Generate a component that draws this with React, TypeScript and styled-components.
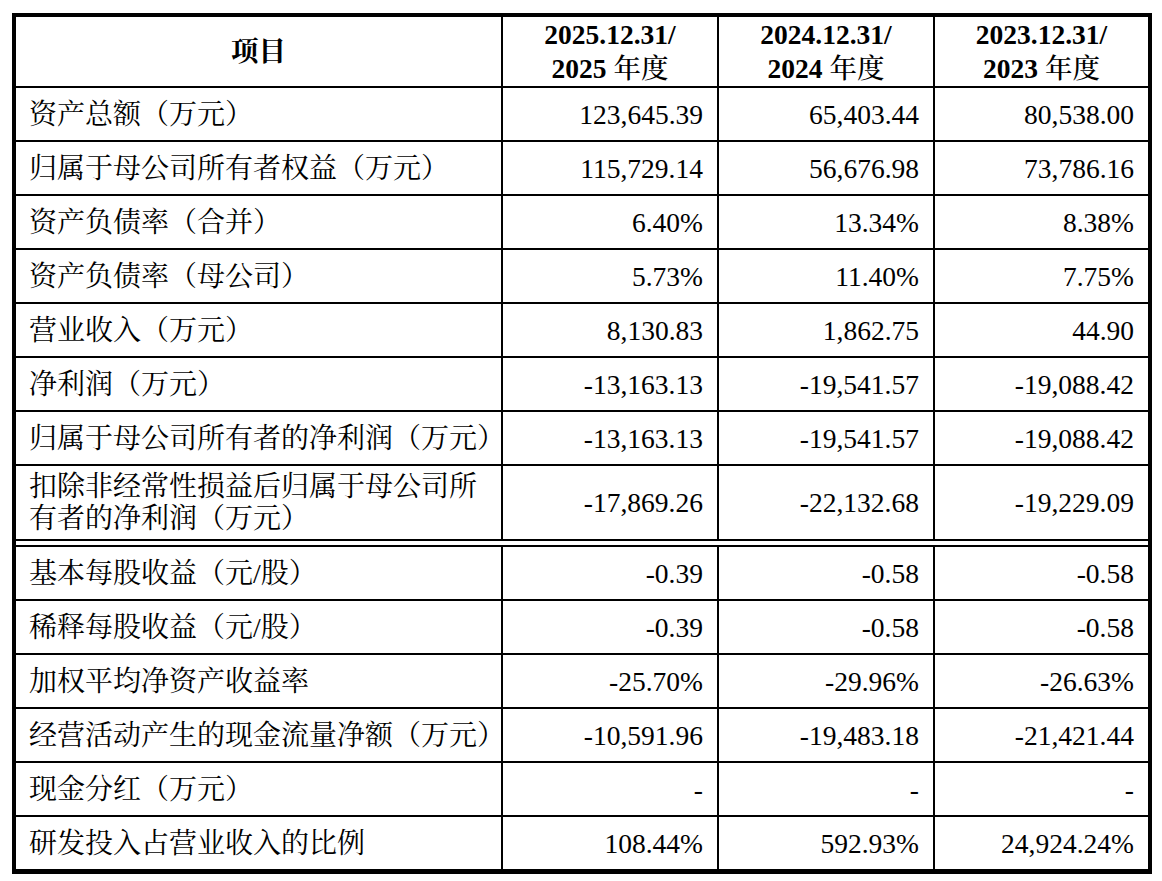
import React from 'react';
import styled, {createGlobalStyle} from 'styled-components';

const GlobalStyle = createGlobalStyle`
  body {
    margin: 0;
    background: #fff;
  }
`

const FONT = `"Liberation Serif", "Noto Serif CJK SC", "Noto Sans CJK SC", serif`

const Sheet = styled.div`
  box-sizing: border-box;
  width: 1140px;
  margin: 13px 0 0 12px;
  border: 4px solid #000;
  border-bottom-width: 5px;
  background: #000;
  display: grid;
  grid-template-columns: 485px 214px 214px 213px;
  gap: 2px;
  font-family: ${FONT};
  color: #000;
`

const HeadCell = styled.div`
  height: 69px;
  background: #fff;
  display: flex;
  align-items: center;
  justify-content: center;
  text-align: center;
  font-size: 27.5px;
  font-weight: bold;
  line-height: 34px;
  .cjk {
    font-weight: 500;
  }
`

const LabelCell = styled.div<{$tall?: boolean}>`
  height: ${p => p.$tall ? 73 : 52}px;
  background: #fff;
  display: flex;
  align-items: center;
  box-sizing: border-box;
  padding: 1px 8px 0 13px;
  font-size: 28px;
  line-height: 32px;
`

const ValueCell = styled.div<{$tall?: boolean}>`
  height: ${p => p.$tall ? 73 : 52}px;
  background: #fff;
  display: flex;
  align-items: center;
  justify-content: flex-end;
  box-sizing: border-box;
  padding: 1px 14px 0 8px;
  font-size: 27.5px;
`

// the double rule under the row that breaks across two lines
const DoubleRule = styled.div`
  grid-column: 1 / -1;
  height: 4px;
  background: #fff;
`

interface IRow {
  label: React.ReactNode
  values: string[]
  tall?: boolean
}

const rows: IRow[] = [
  {label: '资产总额（万元）', values: ['123,645.39', '65,403.44', '80,538.00']},
  {label: '归属于母公司所有者权益（万元）', values: ['115,729.14', '56,676.98', '73,786.16']},
  {label: '资产负债率（合并）', values: ['6.40%', '13.34%', '8.38%']},
  {label: '资产负债率（母公司）', values: ['5.73%', '11.40%', '7.75%']},
  {label: '营业收入（万元）', values: ['8,130.83', '1,862.75', '44.90']},
  {label: '净利润（万元）', values: ['-13,163.13', '-19,541.57', '-19,088.42']},
  {label: '归属于母公司所有者的净利润（万元）', values: ['-13,163.13', '-19,541.57', '-19,088.42']},
  {
    label: <>扣除非经常性损益后归属于母公司所<br/>有者的净利润（万元）</>,
    values: ['-17,869.26', '-22,132.68', '-19,229.09'],
    tall: true
  },
]

const rowsAfter: IRow[] = [
  {label: '基本每股收益（元/股）', values: ['-0.39', '-0.58', '-0.58']},
  {label: '稀释每股收益（元/股）', values: ['-0.39', '-0.58', '-0.58']},
  {label: '加权平均净资产收益率', values: ['-25.70%', '-29.96%', '-26.63%']},
  {label: '经营活动产生的现金流量净额（万元）', values: ['-10,591.96', '-19,483.18', '-21,421.44']},
  {label: '现金分红（万元）', values: ['-', '-', '-']},
  {label: '研发投入占营业收入的比例', values: ['108.44%', '592.93%', '24,924.24%']},
]

const years = ['2025', '2024', '2023']

const renderRows = (list: IRow[]) => list.map((row, i) => (
  <React.Fragment key={i}>
    <LabelCell $tall={row.tall}>
      <div>{row.label}</div>
    </LabelCell>
    {row.values.map((v, j) => (
      <ValueCell key={j} $tall={row.tall}>{v}</ValueCell>
    ))}
  </React.Fragment>
))

const App = () => {
  return (
    <>
      <GlobalStyle/>
      <Sheet>
        <HeadCell>项目</HeadCell>
        {years.map(y => (
          <HeadCell key={y}>
            <div>
              {y}.12.31/<br/>
              {y} <span className="cjk">年度</span>
            </div>
          </HeadCell>
        ))}
        {renderRows(rows)}
        <DoubleRule/>
        {renderRows(rowsAfter)}
      </Sheet>
    </>
  );
};

export default App;
